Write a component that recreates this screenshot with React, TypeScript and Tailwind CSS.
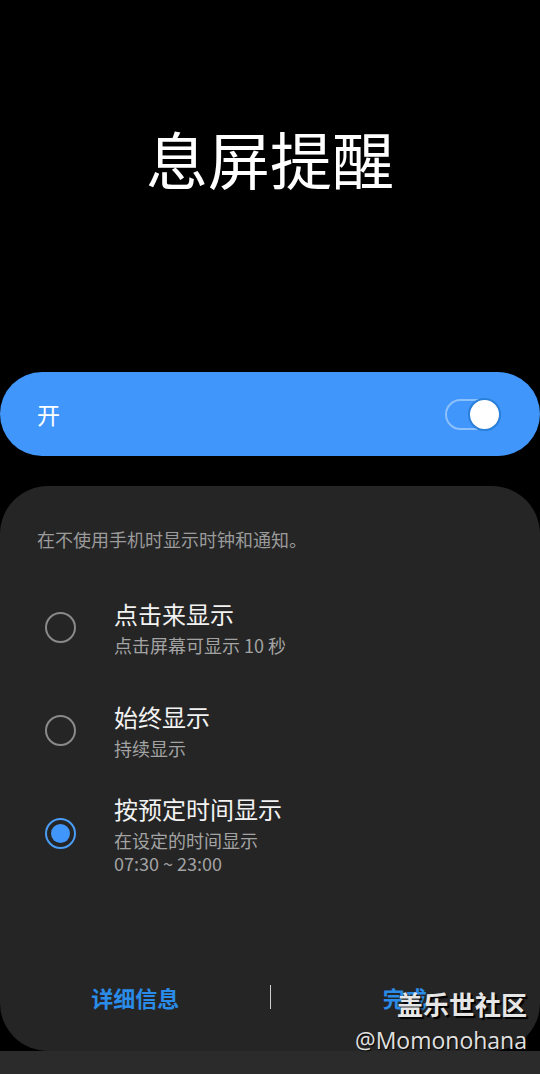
const cjk = '"Noto Sans CJK SC", "Noto Sans", sans-serif';

function Radio({ checked }: { checked?: boolean }) {
  return (
    <div
      className={
        checked
          ? 'flex h-[31px] w-[31px] items-center justify-center rounded-full border-2 border-[#4a9cf5]'
          : 'h-[31px] w-[31px] rounded-full border-2 border-[#8a8a8a]'
      }
    >
      {checked && <div className="h-[19px] w-[19px] rounded-full bg-[#4196fc]" />}
    </div>
  );
}

const options = [
  { title: '点击来显示', sub: ['点击屏幕可显示 10 秒'] },
  { title: '始终显示', sub: ['持续显示'] },
  { title: '按预定时间显示', sub: ['在设定的时间显示', '07:30 ~ 23:00'], checked: true },
];

export default function App() {
  return (
    <div className="flex h-[1074px] w-[540px] flex-col bg-black text-white" style={{ fontFamily: cjk }}>
      <h1 className="pt-[118px] text-center text-[62px] leading-[80px] font-normal text-white">息屏提醒</h1>

      <div className="mt-[174px] flex h-[84px] items-center justify-between rounded-full bg-[#4196fc] pl-[37px] pr-[41px]">
        <span className="text-[23px] text-white">开</span>
        <div className="relative flex h-[31px] w-[54px] items-center rounded-full border-2 border-[#8cc0fb]">
          <div className="absolute right-[-4px] h-[33px] w-[33px] rounded-full border-2 border-[#2a7fd8] bg-white" />
        </div>
      </div>

      <div className="mt-[30px] flex h-[565px] flex-col rounded-[48px] bg-[#252525] px-[37px] pt-[40px]">
        <p className="text-[18px] leading-[26px] text-[#9b9b9b]">在不使用手机时显示时钟和通知。</p>

        <div className="mt-[24px] flex flex-col">
          {options.map((o) => (
            <div key={o.title} className="flex h-[103px] items-center">
              <div className="w-[77px] pl-[8px]">
                <Radio checked={o.checked} />
              </div>
              <div className="flex flex-col">
                <span className="text-[24px] leading-[32px] text-[#f2f2f2]">{o.title}</span>
                <div className="mt-[4px] flex flex-col">
                  {o.sub.map((s) => (
                    <span key={s} className="text-[18px] leading-[23px] text-[#a3a3a3]">
                      {s}
                    </span>
                  ))}
                </div>
              </div>
            </div>
          ))}
        </div>

        <div className="relative mt-auto mb-[39px] flex items-center">
          <span className="flex-1 pr-[36px] text-center text-[22px] leading-[30px] font-bold text-[#2a8ce8]">详细信息</span>
          <div className="h-[24px] w-px bg-[#cfcfcf]" />
          <span className="flex-1 pl-[36px] text-center text-[22px] leading-[30px] font-bold text-[#2a8ce8]">完成</span>

          <div className="absolute right-[-24px] top-[5px] flex flex-col items-end">
            <span
              className="text-[26px] leading-[34px] font-bold text-[#e6e6e6]"
              style={{ textShadow: '2px 2px 1px #000' }}
            >
              盖乐世社区
            </span>
            <span
              className="text-[23px] leading-[38px] text-[#e0e0e0]"
              style={{ fontFamily: '"Open Sans", sans-serif', textShadow: '1px 1px 1px #000' }}
            >
              @Momonohana
            </span>
          </div>
        </div>
      </div>

      <div className="flex-1 bg-[#2b2b2b]" />
    </div>
  );
}
